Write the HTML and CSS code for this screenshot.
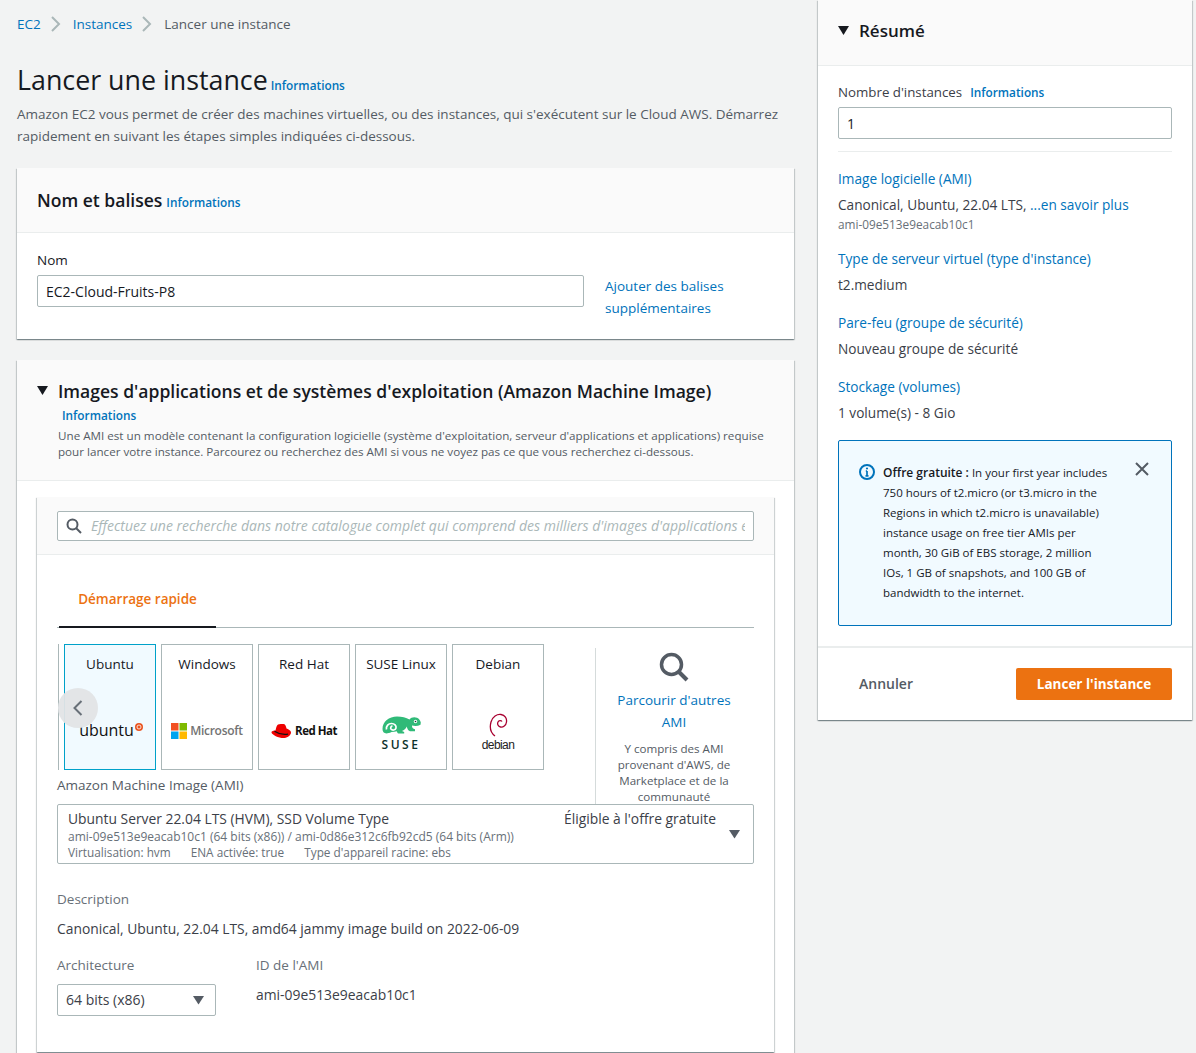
FILE: index.html
```html
<!DOCTYPE html>
<html lang="fr">
<head>
    <meta charset="UTF-8">
    <title>Lancer une instance</title>
    <link rel="stylesheet" href="styles.css">
</head>
<body>
<div class="page">
    <main class="main">
        <nav class="crumbs">
            <a href="#">EC2</a>
            <svg class="crumb-sep" width="10" height="16" viewBox="0 0 10 16"><path d="M1 1l7 7-7 7" fill="none" stroke="#aab7b8" stroke-width="2"/></svg>
            <a href="#">Instances</a>
            <svg class="crumb-sep" width="10" height="16" viewBox="0 0 10 16"><path d="M1 1l7 7-7 7" fill="none" stroke="#aab7b8" stroke-width="2"/></svg>
            <span>Lancer une instance</span>
        </nav>

        <h1 class="page-title">Lancer une instance<a class="info" href="#">Informations</a></h1>
        <p class="page-desc">Amazon EC2 vous permet de créer des machines virtuelles, ou des instances, qui s'exécutent sur le Cloud AWS. Démarrez rapidement en suivant les étapes simples indiquées ci-dessous.</p>

        <section class="card">
            <div class="card-head name-head">
                <h2>Nom et balises<a class="info" href="#">Informations</a></h2>
            </div>
            <div class="name-body">
                <div class="name-field">
                    <label>Nom</label>
                    <input class="input" type="text" value="EC2-Cloud-Fruits-P8">
                </div>
                <a class="more-tags" href="#">Ajouter des balises supplémentaires</a>
            </div>
        </section>

        <section class="card ami-card">
            <div class="card-head ami-head">
                <svg class="caret" width="12" height="10" viewBox="0 0 12 10"><path d="M0 0h11L5.500 9z" fill="#16191f"/></svg>
                <div>
                    <h2>Images d'applications et de systèmes d'exploitation (Amazon Machine Image)</h2>
                    <a class="info ami-info" href="#">Informations</a>
                    <p>Une AMI est un modèle contenant la configuration logicielle (système d'exploitation, serveur d'applications et applications) requise pour lancer votre instance. Parcourez ou recherchez des AMI si vous ne voyez pas ce que vous recherchez ci-dessous.</p>
                </div>
            </div>
            <div class="ami-body">
                <div class="inner">
                    <div class="inner-head">
                        <div class="search">
                            <svg width="16" height="16" viewBox="0 0 16 16"><circle cx="6.500" cy="6.500" r="5" fill="none" stroke="#545b64" stroke-width="2"/><path d="M10 10l5 5" stroke="#545b64" stroke-width="2"/></svg>
                            <input class="search-input" type="text" placeholder="Effectuez une recherche dans notre catalogue complet qui comprend des milliers d'images d'applications et de systèmes d'exploitation">
                        </div>
                    </div>
                    <div class="inner-body">
                        <div class="tabs"><span class="tab">Démarrage rapide</span></div>

                        <div class="quick">
                            <div class="tiles-wrap">
                                <div class="tiles">
                                    <div class="tile-cut"></div>
                                    <div class="tile selected">
                                        <span>Ubuntu</span>
                                        <div class="logo">
                                            <span class="logo-ubuntu">ubuntu</span>
                                            <svg class="ubuntu-dot" width="8" height="8" viewBox="0 0 8 8"><circle cx="4" cy="4" r="4" fill="#e95420"/><circle cx="4" cy="4" r="2" fill="none" stroke="#fff" stroke-width=".8"/></svg>
                                        </div>
                                    </div>
                                    <div class="tile">
                                        <span>Windows</span>
                                        <div class="logo">
                                            <svg width="16" height="16" viewBox="0 0 16 16"><rect width="7.500" height="7.500" fill="#f25022"/><rect x="8.500" width="7.500" height="7.500" fill="#7fba00"/><rect y="8.500" width="7.500" height="7.500" fill="#00a4ef"/><rect x="8.500" y="8.500" width="7.500" height="7.500" fill="#ffb900"/></svg>
                                            <span class="logo-ms">Microsoft</span>
                                        </div>
                                    </div>
                                    <div class="tile">
                                        <span>Red Hat</span>
                                        <div class="logo">
                                            <svg width="21" height="16" viewBox="0 0 21 16"><path d="M7 1.500C8.500.500 11 1 12.500 1c1.500 0 2.500 2 3 4.500 1.500.500 4.500 2 4.500 4 0 2.500-3 5-6.500 5.500C8.500 15.500 1 12 .500 9.500.300 8 3 7.500 4.500 7.500 5 5 5.500 2.500 7 1.500z" fill="#e00"/><path d="M3.500 8.200c3 2 8 3.800 13.500 2.900" fill="none" stroke="#111" stroke-width="1.300"/></svg>
                                            <span class="logo-rh">Red Hat</span>
                                        </div>
                                    </div>
                                    <div class="tile">
                                        <span>SUSE Linux</span>
                                        <div class="logo logo-stack">
                                            <svg width="39" height="20" viewBox="0 0 39 20"><path d="M.5 13C.5 5.500 7 .5 15 .5c5 0 9 1.300 12.500 3C29 1.500 32 .5 35 1.800c2 .9 3.300 2.700 3.800 4.700l-.3 2.200C36 10 33 10.300 30 9.500c-.3 2 1 3.300 3 3.800v2h-5c-2-1-3-3-3.200-4.800-.8 2-2.800 4-4.800 4.500l2.200 1v1.500h-5.700c-1-.5-1.500-1.200-1.700-2.300-1.500.5-3.300.8-5.300.8C3.500 19 .5 17 .5 13z" fill="#30ba78"/><path d="M4.500 13.500C3.800 10 6.500 7.500 9.500 7.500s5 2 4.500 4.500c-.5 2.300-3.700 2.800-5 1-.8-1.300 0-3 1.500-3" fill="none" stroke="#fff" stroke-width="1.700"/><circle cx="33.500" cy="5.500" r="1.700" fill="#fff"/><circle cx="33.500" cy="5.500" r=".8" fill="#0c322c"/></svg>
                                            <span class="logo-suse">SUSE</span>
                                        </div>
                                    </div>
                                    <div class="tile">
                                        <span>Debian</span>
                                        <div class="logo logo-stack logo-deb">
                                            <svg width="20" height="24" viewBox="0 0 20 24"><path d="M7 23C3 20 1.500 14.500 3 9 4.500 3.500 9 1 13 1.500c4 .500 6 4 5.500 7.500-.400 3.500-3.500 5.500-6 5-2.500-.500-3.500-3-2.500-5 .800-1.500 3-2 4-.500" fill="none" stroke="#a80030" stroke-width="1.300"/></svg>
                                            <span class="logo-debian">debian</span>
                                        </div>
                                    </div>
                                </div>
                                <button class="prev" type="button">
                                    <svg width="10" height="16" viewBox="0 0 10 16"><path d="M8.500 1l-7 7 7 7" fill="none" stroke="#687078" stroke-width="2"/></svg>
                                </button>
                                <div class="ami-label">Amazon Machine Image (AMI)</div>
                            </div>
                            <div class="browse">
                                <svg width="30" height="30" viewBox="0 0 30 30"><circle cx="12.500" cy="12.500" r="10" fill="none" stroke="#545b64" stroke-width="3.500"/><path d="M19.500 19.500l8.500 8.500" stroke="#545b64" stroke-width="4"/></svg>
                                <a href="#">Parcourir d'autres AMI</a>
                                <p>Y compris des AMI provenant d'AWS, de Marketplace et de la communauté</p>
                            </div>
                        </div>

                        <div class="ami-select">
                            <div class="ami-select-top">
                                <span>Ubuntu Server 22.04 LTS (HVM), SSD Volume Type</span>
                                <span class="eligible">Éligible à l'offre gratuite</span>
                            </div>
                            <div class="ami-select-sub">ami-09e513e9eacab10c1 (64 bits (x86)) / ami-0d86e312c6fb92cd5 (64 bits (Arm))</div>
                            <div class="ami-select-sub ami-props">
                                <span>Virtualisation: hvm</span>
                                <span>ENA activée: true</span>
                                <span>Type d'appareil racine: ebs</span>
                            </div>
                            <svg class="select-caret" width="12" height="9" viewBox="0 0 12 9"><path d="M0 0h11L5.500 8.500z" fill="#545b64"/></svg>
                        </div>

                        <div class="field-label desc-label">Description</div>
                        <div class="desc-value">Canonical, Ubuntu, 22.04 LTS, amd64 jammy image build on 2022-06-09</div>

                        <div class="arch-row">
                            <div class="arch-col">
                                <div class="field-label">Architecture</div>
                                <div class="arch-select">
                                    <span>64 bits (x86)</span>
                                    <svg width="12" height="9" viewBox="0 0 12 9"><path d="M0 0h11L5.500 8.500z" fill="#545b64"/></svg>
                                </div>
                            </div>
                            <div>
                                <div class="field-label">ID de l'AMI</div>
                                <div class="ami-id">ami-09e513e9eacab10c1</div>
                            </div>
                        </div>
                    </div>
                </div>
            </div>
        </section>
    </main>

    <aside class="summary">
        <div class="summary-head">
            <svg width="12" height="10" viewBox="0 0 12 10"><path d="M0 0h11L5.500 9z" fill="#16191f"/></svg>
            <h2>Résumé</h2>
        </div>
        <div class="summary-body">
            <label class="count-label">Nombre d'instances<a class="info" href="#">Informations</a></label>
            <input class="input" type="text" value="1">
            <hr class="summary-rule">
            <div class="sum-item"><a href="#">Image logicielle (AMI)</a>
                <div>Canonical, Ubuntu, 22.04 LTS, <a href="#">...en savoir plus</a></div>
                <small>ami-09e513e9eacab10c1</small>
            </div>
            <div class="sum-item"><a href="#">Type de serveur virtuel (type d'instance)</a><div>t2.medium</div></div>
            <div class="sum-item"><a href="#">Pare-feu (groupe de sécurité)</a><div>Nouveau groupe de sécurité</div></div>
            <div class="sum-item"><a href="#">Stockage (volumes)</a><div>1 volume(s) - 8 Gio</div></div>
            <div class="alert">
                <svg class="alert-icon" width="18" height="18" viewBox="0 0 18 18"><circle cx="9" cy="9" r="7" fill="none" stroke="#0073bb" stroke-width="2"/><path d="M9 8v4.500M7.500 12.800h3M7.800 8H9" stroke="#0073bb" stroke-width="1.700" fill="none"/><circle cx="9" cy="5.500" r="1.100" fill="#0073bb"/></svg>
                <p><b>Offre gratuite :</b> In your first year includes 750 hours of t2.micro (or t3.micro in the Regions in which t2.micro is unavailable) instance usage on free tier AMIs per month, 30 GiB of EBS storage, 2 million IOs, 1 GB of snapshots, and 100 GB of bandwidth to the internet.</p>
                <svg class="alert-close" width="14" height="14" viewBox="0 0 14 14"><path d="M1 1l12 12M13 1L1 13" stroke="#545b64" stroke-width="2"/></svg>
            </div>
        </div>
        <div class="summary-foot">
            <a class="cancel" href="#">Annuler</a>
            <button class="launch" type="button">Lancer l'instance</button>
        </div>
    </aside>
</div>
</body>
</html>
```
FILE: styles.css
```css
* {
    box-sizing: border-box;
}
html, body {
    margin: 0;
    height: 1053px;
    overflow: hidden;
}
body {
    font-family: "Open Sans", Arial, sans-serif;
    font-size: 13.5px;
    line-height: 22px;
    color: #16191f;
    background: #f2f3f3;
}
a {
    color: #0073bb;
    text-decoration: none;
}
h1, h2, p {
    margin: 0;
}
.page {
    display: flex;
    align-items: flex-start;
    padding-right: 4px;
}
.main {
    width: 794px;
    padding-left: 17px;
    flex: none;
}
.info {
    font-size: 11.8px;
    font-weight: 600;
}

/* breadcrumb and title */
.crumbs {
    display: flex;
    align-items: center;
    height: 22px;
    margin-top: 13px;
    color: #545b64;
}
.crumb-sep {
    margin: 0 12px 0 10px;
}
.page-title {
    font-size: 26.8px;
    font-weight: 400;
    line-height: 36px;
    margin-top: 27px;
}
.page-title .info {
    margin-left: 3px;
}
.page-desc {
    color: #545b64;
    padding-right: 10px;
}

/* cards */
.card {
    background: #fff;
    box-shadow: 0 1px 1px 0 rgba(0,28,36,.3), 1px 1px 1px 0 rgba(0,28,36,.15), -1px 1px 1px 0 rgba(0,28,36,.15);
    margin-top: 21px;
}
.card-head {
    background: #fafafa;
    border-bottom: 1px solid #eaeded;
}
.card-head h2 {
    font-size: 17.55px;
    font-weight: 600;
    line-height: 24px;
}
.name-head {
    height: 65px;
    padding: 20px 20px 0;
}
.name-head .info {
    margin-left: 4px;
}
.name-body {
    display: flex;
    padding: 16px 20px 20px;
    height: 106px;
}
.name-field {
    width: 547px;
    flex: none;
}
.name-field label {
    display: block;
    height: 26px;
}
.input {
    display: block;
    width: 100%;
    height: 32px;
    border: 1px solid #aab7b8;
    border-radius: 2px;
    padding: 0 8px;
    font: inherit;
    font-size: 14px;
    color: #16191f;
    background: #fff;
}
.more-tags {
    display: block;
    width: 150px;
    margin: 26px 0 0 21px;
}

.ami-card {
    height: 700px;
}
.ami-head {
    display: flex;
    height: 121px;
    padding: 19px 20px 0;
}
.ami-head .caret {
    margin: 7px 9px 0 0;
    flex: none;
}
.ami-info {
    display: block;
    margin: 2px 0 0 4px;
    line-height: 20px;
}
.ami-head p {
    font-size: 11.65px;
    line-height: 16px;
    color: #545b64;
    margin-top: 3px;
}
.ami-body {
    padding: 16px 20px 0;
}
.inner {
    box-shadow: 0 1px 1px 0 rgba(0,28,36,.3), 1px 1px 1px 0 rgba(0,28,36,.15), -1px 1px 1px 0 rgba(0,28,36,.15);
    height: 555px;
}
.inner-head {
    background: #fafafa;
    border-bottom: 1px solid #eaeded;
    height: 58px;
    padding: 14px 20px 0;
}
.search {
    display: flex;
    align-items: center;
    gap: 9px;
    height: 30px;
    border: 1px solid #aab7b8;
    border-radius: 2px;
    background: #fff;
    padding: 0 8px;
}
.search svg {
    flex: none;
}
.search-input {
    flex: 1;
    min-width: 0;
    border: none;
    padding: 0;
    outline: none;
    background: none;
    font: inherit;
    font-size: 14px;
    font-style: italic;
}
.search-input::placeholder {
    color: #aab7b8;
    opacity: 1;
}
.inner-body {
    padding: 0 20px;
}

/* tabs */
.tabs {
    height: 73px;
    border-bottom: 1px solid #aab7b8;
    display: flex;
    align-items: flex-end;
}
.tab {
    display: block;
    width: 157px;
    margin-left: 2px;
    height: 73px;
    line-height: 88px;
    text-align: center;
    font-weight: 600;
    color: #ec7211;
    border-bottom: 2px solid #16191f;
    margin-bottom: -1px;
}

/* quick start tiles */
.quick {
    display: flex;
    height: 176px;
}
.tiles-wrap {
    position: relative;
    width: 538px;
    flex: none;
    padding-top: 16px;
}
.tiles {
    display: flex;
    gap: 5px;
}
.tile-cut {
    width: 2px;
    height: 126px;
    border-right: 1px solid #aab7b8;
}
.tile {
    width: 92px;
    height: 126px;
    border: 1px solid #aab7b8;
    text-align: center;
    padding-top: 8px;
    flex: none;
}
.tile.selected {
    border-color: #00a1c9;
    background: #f1faff;
}
.logo {
    height: 50px;
    margin-top: 31px;
    display: flex;
    align-items: center;
    justify-content: center;
}
.logo-stack {
    flex-direction: column;
    margin-top: 34px;
}
.logo-deb {
    margin-top: 32px;
}
.logo-ubuntu {
    font-size: 16px;
    color: #111;
    margin: -2px 0 0 2px;
}
.ubuntu-dot {
    margin: 0 0 9px 1px;
}
.logo-ms {
    font-size: 12px;
    font-weight: 600;
    color: #737373;
    margin-left: 3px;
    letter-spacing: -.3px;
}
.logo-rh {
    font-size: 11.5px;
    font-weight: 700;
    margin-left: 3px;
    letter-spacing: -.5px;
    color: #111;
}
.logo-suse {
    font-size: 12px;
    font-weight: 600;
    letter-spacing: 2.500px;
    line-height: 14px;
    margin-top: 2px;
    color: #0c322c;
}
.logo-debian {
    font-family: "Liberation Sans", Arial, sans-serif;
    font-size: 12px;
    line-height: 14px;
    letter-spacing: -.6px;
    margin-top: 1px;
    color: #222;
}
.prev {
    position: absolute;
    left: 1px;
    top: 60px;
    width: 40px;
    height: 40px;
    border: none;
    border-radius: 50%;
    background: rgba(225,228,230,.95);
    padding: 0;
    display: flex;
    align-items: center;
    justify-content: center;
}
.ami-label {
    color: #545b64;
    line-height: 22px;
    margin-top: 4px;
}
.browse {
    width: 159px;
    height: 156px;
    margin-top: 20px;
    border-left: 1px solid #d5dbdb;
    text-align: center;
    padding: 4px 2px 0 0;
    overflow: hidden;
}
.browse svg {
    display: block;
    margin: 0 auto;
}
.browse a {
    display: block;
    padding: 0 10px;
    margin-top: 7px;
}
.browse p {
    font-size: 11.6px;
    line-height: 16px;
    color: #545b64;
    margin-top: 8px;
    padding: 0 10px;
}

/* ami select */
.ami-select {
    position: relative;
    height: 60px;
    border: 1px solid #aab7b8;
    border-radius: 2px;
    padding: 4px 10px;
}
.ami-select-top {
    display: flex;
    line-height: 20px;
    font-size: 13.85px;
    color: #3b4048;
}
.ami-select-top span:first-child {
    width: 496px;
}
.ami-select-sub {
    font-size: 12px;
    line-height: 14px;
    color: #687078;
    margin-top: 1px;
}
.ami-props {
    display: flex;
    gap: 20px;
    margin-top: 1px;
    font-size: 11.8px;
}
.select-caret {
    position: absolute;
    right: 12px;
    top: 25px;
}
.field-label {
    color: #687078;
}
.desc-label {
    margin-top: 24px;
}
.desc-value {
    font-size: 13.85px;
    color: #3b4048;
    margin-top: 8px;
}
.arch-row {
    display: flex;
    margin-top: 14px;
}
.arch-col {
    width: 199px;
    flex: none;
}
.arch-select {
    display: flex;
    align-items: center;
    justify-content: space-between;
    width: 159px;
    height: 32px;
    border: 1px solid #aab7b8;
    border-radius: 2px;
    padding: 0 10px 0 8px;
    margin-top: 8px;
    font-size: 14px;
    color: #3b4048;
}
.ami-id {
    font-size: 13.9px;
    color: #3b4048;
    margin-top: 8px;
}

/* right column */
.summary {
    width: 374px;
    margin-left: 24px;
    flex: none;
    height: 720px;
    background: #fff;
    box-shadow: 0 1px 1px 0 rgba(0,28,36,.3), 1px 1px 1px 0 rgba(0,28,36,.15), -1px 1px 1px 0 rgba(0,28,36,.15);
}
.summary-head {
    display: flex;
    align-items: center;
    gap: 9px;
    height: 66px;
    padding: 0 20px 4px;
    border-bottom: 1px solid #eaeded;
    background: #fafafa;
}
.summary-head h2 {
    font-size: 17px;
    font-weight: 600;
}
.summary-body {
    padding: 15px 20px 0;
}
.count-label {
    display: block;
    height: 26px;
    font-size: 13.3px;
    color: #3b4048;
}
.count-label .info {
    margin-left: 8px;
}
.summary-rule {
    border: none;
    border-top: 1px solid #eaeded;
    margin: 12px 0 16px;
}
.sum-item {
    margin-bottom: 16px;
    font-size: 13.65px;
    color: #3b4048;
}
.sum-item > div {
    margin-top: 4px;
}
.sum-item small {
    display: block;
    font-size: 11.8px;
    line-height: 16px;
    color: #687078;
}
.alert {
    position: relative;
    display: flex;
    height: 186px;
    border: 1px solid #0073bb;
    border-radius: 2px;
    background: #f1faff;
    padding: 22px 20px 0;
    margin-top: 15px;
}
.alert-icon {
    flex: none;
    margin: 0 7px 0 -1px;
}
.alert p {
    font-size: 11.5px;
    line-height: 20px;
    width: 226px;
}
.alert b {
    font-size: 12px;
    font-weight: 600;
}
.alert-close {
    position: absolute;
    right: 22px;
    top: 21px;
}
.summary-foot {
    display: flex;
    align-items: center;
    justify-content: space-between;
    height: 73px;
    margin-top: 20px;
    border-top: 2px solid #eaeded;
    padding: 0 20px 0 41px;
}
.cancel {
    font-size: 14px;
    color: #545b64;
    font-weight: 600;
}
.launch {
    width: 156px;
    height: 32px;
    border: none;
    border-radius: 2px;
    background: #ec7211;
    color: #fff;
    font: inherit;
    font-weight: 700;
}
```
